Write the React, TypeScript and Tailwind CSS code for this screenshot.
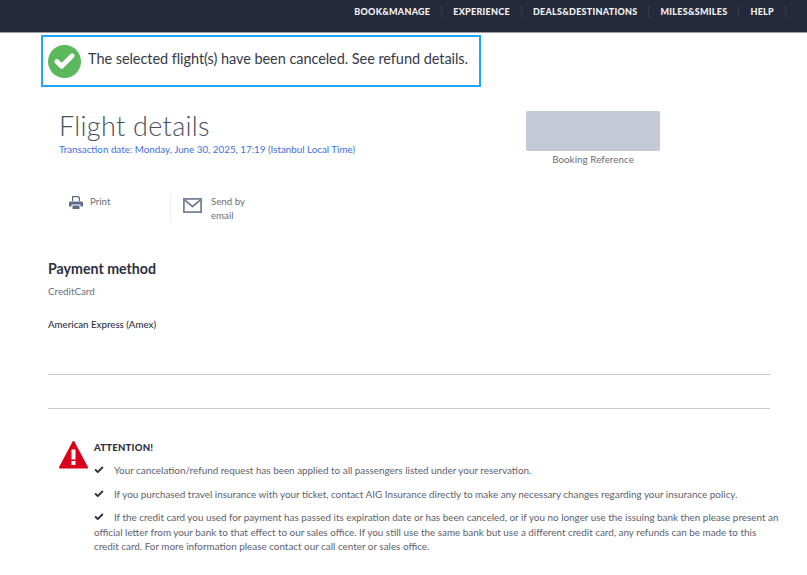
import { Check } from 'lucide-react';

const navItems = ['BOOK&MANAGE', 'EXPERIENCE', 'DEALS&DESTINATIONS', 'MILES&SMILES', 'HELP'];

const notes = [
  'Your cancelation/refund request has been applied to all passengers listed under your reservation.',
  'If you purchased travel insurance with your ticket, contact AIG Insurance directly to make any necessary changes regarding your insurance policy.',
  'If the credit card you used for payment has passed its expiration date or has been canceled, or if you no longer use the issuing bank then please present an official letter from your bank to that effect to our sales office. If you still use the same bank but use a different credit card, any refunds can be made to this credit card. For more information please contact our call center or sales office.',
];

export default function App() {
  return (
    <div className="h-[575px] w-[807px] overflow-hidden bg-white font-['Lato',sans-serif] text-[#3d4352]">
      <header className="flex h-[33px] items-start justify-end border-b border-[#9a9da5] bg-[#252a3a] pr-[21px] pt-[5px]">
        {navItems.map((item) => (
          <span
            key={item}
            className="flex h-[11px] items-center border-r border-[#353a4a] px-[11px] py-[6px] text-[9px] font-black leading-none tracking-[0.27px] text-[#f2f3f5]"
          >
            {item}
          </span>
        ))}
      </header>

      <div className="ml-[41px] mt-[2px] flex h-[52px] w-[440px] items-center gap-[7px] border-2 border-[#1ea7fd] pl-[5px]">
        <span className="flex h-[33px] w-[33px] items-center justify-center rounded-full bg-[#5cb85c]">
          <Check size={23} strokeWidth={5} className="text-white" />
        </span>
        <span className="pb-[3px] text-[14.5px] leading-none tracking-[-0.06px] text-[#343a48]">
          The selected flight(s) have been canceled. See refund details.
        </span>
      </div>

      <section className="flex">
        <div className="ml-[59px] w-[467px] pt-[22px]">
          <h1 className="text-[27px] font-light leading-[33px] tracking-[0.3px] text-[#4a4f5c]">Flight details</h1>
          <p className="text-[9.8px] leading-[14px] text-[#3f6fe0]">
            Transaction date: Monday, June 30, 2025, 17:19 (Istanbul Local Time)
          </p>
        </div>
        <div className="mt-[24px] w-[134px] text-center">
          <div className="h-[40px] rounded-[2px] bg-[#c3c9d5]" />
          <p className="mt-[1px] text-[9.7px] leading-[14px] tracking-[0.1px] text-[#6a6e78]">Booking Reference</p>
        </div>
      </section>

      <section className="ml-[69px] mt-[28px] flex">
        <div className="flex h-[28px] w-[102px] gap-[7px] border-r border-[#eeeff1]">
          <svg width="14" height="13" viewBox="0 0 14 13" className="mt-[2px]" fill="#5c6b85">
            <path d="M3 0h6.500L11 1.500V5H9.800V2.200L9 1.200H4.200V5H3z" />
            <path d="M1.500 5.500h11A1.500 1.500 0 0 1 14 7v3.500h-2.500V8.500h-9v2H0V7a1.500 1.500 0 0 1 1.500-1.500z" />
            <path d="M3.500 9.500h7V13h-7z" />
          </svg>
          <span className="text-[9.7px] leading-[14px] text-[#6a6e78]">Print</span>
        </div>
        <div className="ml-[12px] flex gap-[9px]">
          <svg width="19" height="15" viewBox="0 0 19 15" className="mt-[4px]" fill="none" stroke="#75829a" strokeWidth="1.800">
            <rect x="0.900" y="0.900" width="17.200" height="13.200" />
            <path d="M1 1.500l8.500 7 8.500-7" />
          </svg>
          <span className="w-[44px] text-[9.7px] leading-[14px] text-[#6a6e78]">Send by email</span>
        </div>
      </section>

      <section className="mx-[48px] mt-[38px]">
        <h2 className="text-[14.2px] font-bold leading-[18px] text-[#2c3140]">Payment method</h2>
        <p className="mt-[6px] text-[9.8px] leading-[14px] text-[#6a6e78]">CreditCard</p>
        <p className="mt-[19px] text-[9.7px] font-medium leading-[14px] text-[#2c3140]">American Express (Amex)</p>
        <hr className="mt-[43px] w-[722px] border-[#c9cbcf]" />
        <hr className="mt-[33px] w-[722px] border-[#c9cbcf]" />
      </section>

      <section className="ml-[59px] mt-[32px] flex gap-[6px]">
        <svg width="29" height="28" viewBox="0 0 29 28" className="shrink-0">
          <path d="M14.500 1L28 26.500H1z" fill="#d9001b" stroke="#d9001b" strokeWidth="2" strokeLinejoin="round" />
          <rect x="12.500" y="8.500" width="4" height="10" fill="#fff" />
          <rect x="12.500" y="20" width="4" height="4" fill="#fff" />
        </svg>
        <div className="w-[686px]">
          <p className="text-[9.6px] font-black leading-[14px] tracking-[0.2px] text-[#2c3140]">ATTENTION!</p>
          <ul className="mt-[8px] space-y-[9.500px]">
            {notes.map((note) => (
              <li key={note} className="text-[9.900px] leading-[14.200px] text-[#5d616c]">
                <Check size={10} strokeWidth={4.5} className="mr-[10px] inline-block align-[-1px] text-[#2c3140]" />
                {note}
              </li>
            ))}
          </ul>
        </div>
      </section>
    </div>
  );
}
